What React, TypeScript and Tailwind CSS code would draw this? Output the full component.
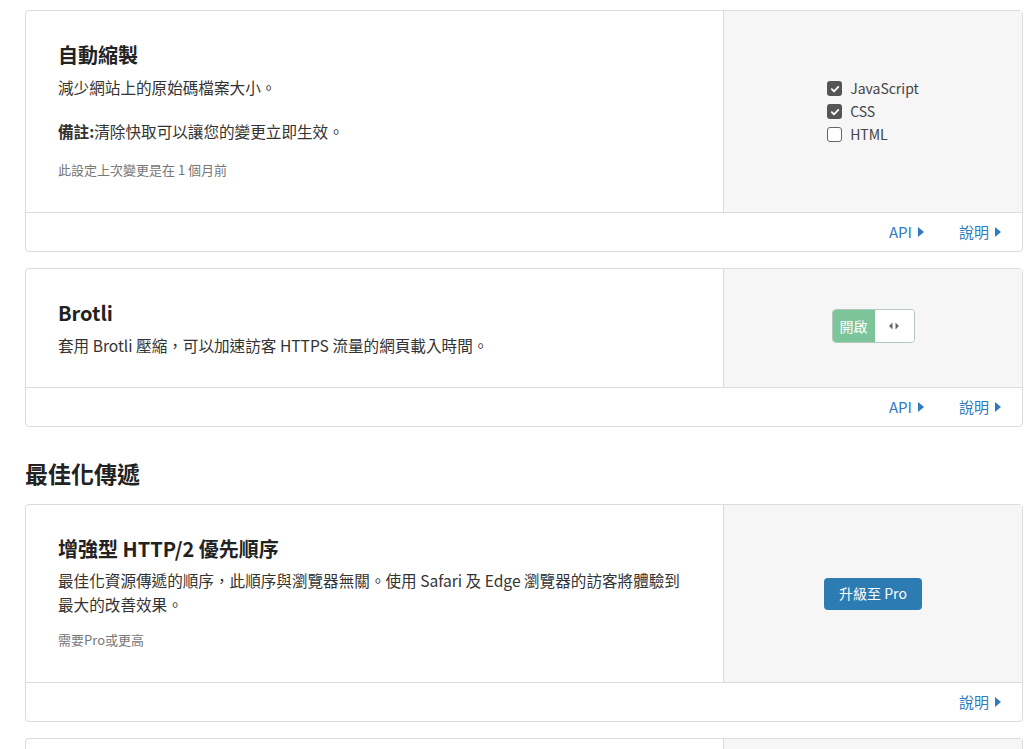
import React from 'react';

const FONT = { fontFamily: '"Noto Sans CJK TC", "Noto Sans", sans-serif' };

function Caret() {
  return (
    <svg width="6" height="10" viewBox="0 0 6 10" className="ml-[6px] inline-block">
      <path d="M0 0 L6 5 L0 10 Z" fill="currentColor" />
    </svg>
  );
}

function Check({ checked, label }: { checked: boolean; label: string }) {
  return (
    <div className="flex items-center gap-[8px] h-[23px]">
      {checked ? (
        <span className="flex h-[15px] w-[15px] items-center justify-center rounded-[3px] bg-[#555]">
          <svg width="10" height="10" viewBox="0 0 10 10">
            <path d="M1.8 5.2 L4 7.3 L8.3 2.8" stroke="#fff" strokeWidth="1.8" fill="none" strokeLinecap="round" strokeLinejoin="round" />
          </svg>
        </span>
      ) : (
        <span className="h-[15px] w-[15px] rounded-[3px] border border-[#666] bg-white" />
      )}
      <span className="text-[14px] text-[#444]">{label}</span>
    </div>
  );
}

function Card({
  children,
  side,
  links,
  bodyClass = 'pt-[30px] pb-[32px]',
}: {
  children: React.ReactNode;
  side: React.ReactNode;
  links: string[];
  bodyClass?: string;
}) {
  return (
    <div className="rounded-[4px] border border-[#dcdcdc] bg-white">
      <div className="flex">
        <div className={`flex-1 px-[32px] ${bodyClass}`}>{children}</div>
        <div className="flex w-[299px] items-center justify-center border-l border-[#dcdcdc] bg-[#f6f6f6]">
          {side}
        </div>
      </div>
      <div className="flex h-[39px] items-center justify-end gap-[35px] border-t border-[#dcdcdc] pr-[21px] text-[15px] text-[#2f7bbf]">
        {links.map((l) => (
          <span key={l} className="flex items-center">
            {l}
            <Caret />
          </span>
        ))}
      </div>
    </div>
  );
}

export default function App() {
  return (
    <div className="min-h-[749px] overflow-hidden bg-white pl-[25px] pr-[1px] pt-[10px] text-[#333]" style={FONT}>
      <Card
        links={['API', '說明']}
        side={
          <div className="flex flex-col">
            <Check checked label="JavaScript" />
            <Check checked label="CSS" />
            <Check checked={false} label="HTML" />
          </div>
        }
      >
        <h3 className="text-[20px] font-semibold leading-[28px] text-[#222]">自動縮製</h3>
        <p className="mt-[6px] text-[15.6px] leading-[24px]">減少網站上的原始碼檔案大小。</p>
        <p className="mt-[20px] text-[15.6px] leading-[24px]">
          <span className="font-bold">備註:</span>清除快取可以讓您的變更立即生效。
        </p>
        <p className="mt-[17px] text-[13px] leading-[20px] text-[#777]">此設定上次變更是在 1 個月前</p>
      </Card>

      <div className="mt-[16px]">
        <Card
          links={['API', '說明']}
          bodyClass="pt-[30px] pb-[30px]"
          side={
            <div className="mb-[4px] flex h-[34px] overflow-hidden rounded-[4px] border border-[#b5c7bc]">
              <span className="flex w-[42px] items-center justify-center bg-[#7cc59a] text-[14px] text-white">開啟</span>
              <span className="flex w-[39px] items-center justify-center rounded-l-[4px] bg-white">
                <svg width="10" height="8" viewBox="0 0 10 8">
                  <path d="M0 4 L3.5 0.5 L3.5 7.5 Z M10 4 L6.5 0.5 L6.5 7.5 Z" fill="#666" />
                </svg>
              </span>
            </div>
          }
        >
          <h3 className="text-[20px] font-semibold leading-[28px] text-[#222]">Brotli</h3>
          <p className="mt-[6px] text-[15.6px] leading-[24px]">套用 Brotli 壓縮，可以加速訪客 HTTPS 流量的網頁載入時間。</p>
        </Card>
      </div>

      <h2 className="mt-[30px] mb-[15px] text-[23px] font-bold leading-[32px] text-[#222]">最佳化傳遞</h2>

      <Card
        links={['說明']}
        side={
          <button className="h-[32px] rounded-[4px] bg-[#2c7bb3] px-[15px] text-[14px] text-white">升級至 Pro</button>
        }
      >
        <h3 className="text-[20px] font-semibold leading-[28px] text-[#222]">增強型 HTTP/2 優先順序</h3>
        <p className="mt-[5px] max-w-[630px] text-[15.6px] leading-[24px]">
          最佳化資源傳遞的順序，此順序與瀏覽器無關。使用 Safari 及 Edge 瀏覽器的訪客將體驗到最大的改善效果。
        </p>
        <p className="mt-[14px] text-[13px] leading-[20px] text-[#777]">需要Pro或更高</p>
      </Card>

      <div className="mt-[16px] flex h-[60px] rounded-t-[4px] border border-b-0 border-[#dcdcdc]">
        <div className="flex-1" />
        <div className="w-[299px] border-l border-[#dcdcdc] bg-[#f6f6f6]" />
      </div>
    </div>
  );
}
